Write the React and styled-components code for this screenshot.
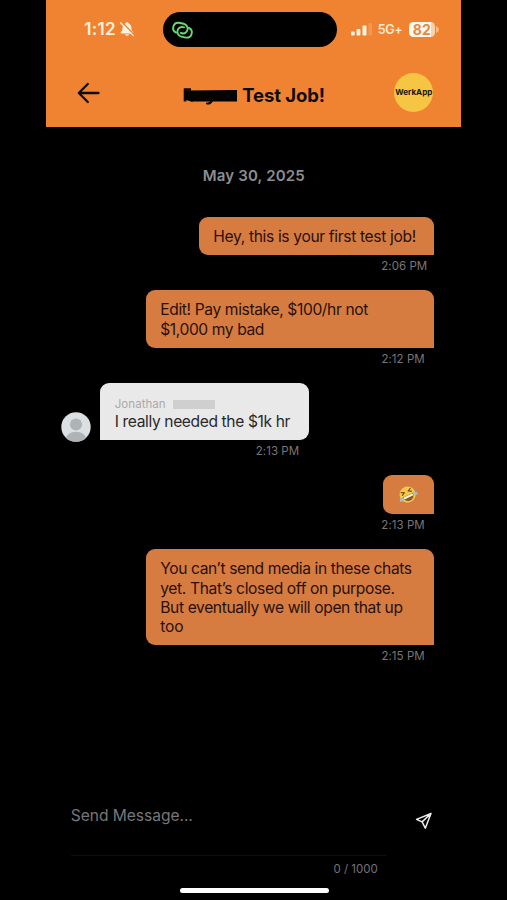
import React from "react";
import styled, { createGlobalStyle } from "styled-components";

const Global = createGlobalStyle`
  * { box-sizing: border-box; }
  html, body { margin: 0; background: #000; }
  body { font-family: Inter, "Liberation Sans", sans-serif; }
`;

const Stage = styled.div`
  display: flex;
  justify-content: center;
  width: 507px;
  height: 900px;
  overflow: hidden;
  background: #000;
`;

const Phone = styled.main`
  display: flex;
  flex-direction: column;
  width: 414.5px;
  height: 900px;
`;

const Header = styled.header`
  flex: none;
  height: 126.5px;
  background: #f08332;
`;

const StatusBar = styled.div`
  display: grid;
  grid-template-columns: 117px 174px 1fr;
  align-items: center;
  height: 59px;
`;

const Clock = styled.div`
  display: flex;
  align-items: center;
  gap: 3.5px;
  padding-left: 38px;
  color: #fff1dc;
  font-size: 17px;
  font-weight: 600;
  letter-spacing: 0.3px;
  line-height: 20px;
  padding-bottom: 1px;
  white-space: nowrap;
`;

const Island = styled.div`
  display: flex;
  align-items: center;
  height: 35.5px;
  padding-left: 7px;
  border-radius: 18px;
  background: #000;
`;

const Signals = styled.div`
  display: flex;
  align-items: center;
  padding-left: 13.5px;
  color: #ffe9cd;
`;

const Network = styled.span`
  width: 25px;
  margin: 0 6px 0 5px;
  font-size: 12.5px;
  font-weight: 600;
  letter-spacing: -0.4px;
`;

const Battery = styled.div`
  display: flex;
  align-items: center;
  gap: 1px;
`;

const Charge = styled.div`
  width: 26px;
  height: 15px;
  border-radius: 4.5px;
  background: linear-gradient(90deg, #fffaf0 0 84%, #fbd2a8 84%);
  color: #e58a42;
  font-size: 14px;
  font-weight: 700;
  line-height: 15px;
  text-align: center;
`;

const TitleBar = styled.div`
  display: grid;
  grid-template-columns: 117px 181px 1fr;
  align-items: center;
  height: 67px;
`;

const BackButton = styled.button`
  display: flex;
  width: 26px;
  height: 24px;
  margin: 0 0 0 30px;
  padding: 0;
  border: 0;
  background: none;
`;

const Title = styled.h1`
  display: flex;
  align-items: center;
  gap: 5px;
  margin: 4px 0 0;
  padding-left: 20px;
  color: #100b07;
  font-size: 18.5px;
  font-weight: 700;
  line-height: 22px;
  letter-spacing: -0.1px;
  white-space: nowrap;
`;

const Logo = styled.div`
  display: flex;
  align-items: center;
  justify-content: center;
  width: 39px;
  height: 39px;
  margin: 0 0 1px 50px;
  border-radius: 50%;
  background: #f5c543;
  color: #17130a;
  font-size: 8.1px;
  font-weight: 700;
  white-space: nowrap;
`;

const Chat = styled.section`
  display: flex;
  flex-direction: column;
  flex: 1;
  padding: 0 26.5px 0 14.5px;
`;

const DateLabel = styled.div`
  height: 90px;
  padding: 38px 0 0 142px;
  color: #8d8d90;
  font-size: 15px;
  font-weight: 600;
  line-height: 22px;
  letter-spacing: 0.17px;
  white-space: nowrap;
`;

const Message = styled.article`
  display: flex;
  flex-direction: column;
  align-items: ${(p) => (p.$incoming ? "flex-start" : "flex-end")};
`;

const BubbleRow = styled.div`
  display: flex;
  align-items: flex-end;
  gap: 9.5px;
`;

const Bubble = styled.div`
  width: ${(p) => p.$width}px;
  padding: 10.4px 14.5px 9px;
  border-radius: ${(p) => (p.$incoming ? "9px 9px 9px 0" : "9px 9px 0 9px")};
  background: ${(p) => (p.$incoming ? "#e9e9e9" : "#d67c41")};
  color: ${(p) => (p.$incoming ? "#29292b" : "#2a1009")};
  font-size: 15.6px;
  line-height: 19.25px;
`;

const Line = styled.div`
  letter-spacing: ${(p) => p.$track}px;
  white-space: nowrap;
`;

const Sender = styled.div`
  display: flex;
  align-items: center;
  gap: 7px;
  height: 19px;
  padding-top: 4px;
  color: #aaaaac;
  font-size: 11.5px;
  letter-spacing: 0.05px;
`;

const Redacted = styled.span`
  width: 42px;
  height: 9px;
  background: #cfcfcf;
`;

const Time = styled.time`
  height: 34.9px;
  padding: 3px ${(p) => p.$end}px 0 0;
  margin-left: ${(p) => p.$start || 0}px;
  color: #77777a;
  font-size: 11.5px;
  line-height: 16px;
  letter-spacing: 0.05px;
  white-space: nowrap;
`;

const Composer = styled.footer`
  display: grid;
  grid-template-columns: 316px 1fr;
  grid-template-rows: 71px 31px 13px;
  height: 115px;
  padding-left: 24.5px;
`;

const Field = styled.div`
  padding-top: 21px;
  border-bottom: 1px solid #0e0e0e;
  color: #77777a;
  font-size: 15.6px;
  line-height: 20px;
  letter-spacing: -0.05px;
`;

const SendButton = styled.button`
  display: flex;
  width: 18px;
  height: 18px;
  margin: 27px 0 0 28.5px;
  padding: 0;
  border: 0;
  background: none;
`;

const Counter = styled.div`
  padding: 5px 9px 0 0;
  color: #747477;
  font-size: 11.5px;
  line-height: 16px;
  text-align: right;
`;

const HomeIndicator = styled.div`
  grid-column: 1 / -1;
  width: 149px;
  height: 5px;
  margin: 0.5px 0 0 109px;
  border-radius: 3px;
  background: #fff;
`;

const MutedBell = () => (
  <svg width="16" height="16" viewBox="0 0 16 16" fill="none">
    <path d="M8 1.2c-.8 0-1.2.5-1.4 1.1C4.5 3 3.7 4.800 3.500 7.200c-.1 2-.6 2.600-1.500 3.500-.7.7-.3 1.800.6 1.800h10.800c.9 0 1.300-1.100.6-1.800-.9-.9-1.400-1.500-1.500-3.500-.2-2.400-1-4.200-3.100-4.900C9.200 1.700 8.800 1.200 8 1.200zM5.900 13.300a2.200 2.200 0 0 0 4.200 0z" fill="#fff1dc" />
    <path d="M2.800 1l12.300 12.500" stroke="#f08332" strokeWidth="1.400" />
    <path d="M1.500 1.800l12.800 12.800" stroke="#fff1dc" strokeWidth="1.250" strokeLinecap="round" />
  </svg>
);

const LinkIcon = () => (
  <svg width="24" height="20" viewBox="0 0 24 20" fill="none" stroke="#69d873" strokeWidth="1.900" strokeLinecap="round">
    <g transform="translate(12.500 10.200) rotate(12)">
      <path d="M-5.800 3.700A5.200 5.200 0 0 1-5-6.500H-.2A5 5 0 0 1 4.600 0C4 2 2.200 3.100 .2 3.100H-1" />
      <path d="M5.800-3.700A5.200 5.200 0 0 1 5 6.500H.2A5 5 0 0 1-4.600 0C-4-2-2.200-3.100-.2-3.100H1" />
    </g>
  </svg>
);

const SignalBars = () => (
  <svg width="22" height="13" viewBox="0 0 22 13" fill="#fff1dc">
    <rect x="0" y="8.500" width="3.700" height="4" rx="1" />
    <rect x="5.500" y="6" width="3.900" height="6.500" rx="1" />
    <rect x="11.500" y="2.500" width="4" height="10" rx="1" />
    <rect x="17.500" y="0" width="3.500" height="12.500" rx="1" opacity=".2" />
  </svg>
);

const BatteryTip = () => (
  <svg width="4" height="7" viewBox="0 0 4 7"><path d="M0 0q3 1.500 3 3.500T0 7z" fill="#f9bd83" /></svg>
);

const BackArrow = () => (
  <svg width="26" height="24" viewBox="0 0 26 24" fill="none" stroke="#100b07" strokeWidth="2.300" strokeLinecap="round" strokeLinejoin="round">
    <path d="M11.800 3L2.800 12l9 9M3.300 12H22.500" />
  </svg>
);

const RedactedName = () => (
  <svg width="54" height="20" viewBox="0 0 54 20" fill="none">
    <path d="M2 3.500v13M1 4.500h7M5 11l5 5" stroke="#0b0806" strokeWidth="2.600" />
    <path d="M3 5.500L54 5V16.500H8L3 15z" fill="#050302" />
    <path d="M24 18.500q3.500.5 5-3" stroke="#0b0806" strokeWidth="2" strokeLinecap="round" />
  </svg>
);

const AvatarFrame = styled.div`
  display: flex;
  margin-bottom: -1.5px;
`;

const Avatar = () => (
  <AvatarFrame>
    <svg width="30" height="30" viewBox="0 0 30 30">
      <defs><clipPath id="avatar"><circle cx="15" cy="15" r="14.700" /></clipPath></defs>
      <g clipPath="url(#avatar)">
        <rect width="30" height="30" fill="#dce0e2" />
        <circle cx="15" cy="12.500" r="6" fill="#aeb3b6" />
        <ellipse cx="15" cy="26.500" rx="10" ry="6.800" fill="#aeb3b6" />
      </g>
    </svg>
  </AvatarFrame>
);

const EmojiSlot = styled.div`
  display: flex;
  height: 19.25px;
`;

const Laughing = () => (
  <svg width="22" height="19" viewBox="0 0 22 19" fill="none">
    <g transform="rotate(-25 11 9.500)">
      <circle cx="11" cy="8.500" r="8" fill="#f3cb49" />
      <path d="M5.500 9.200h11c0 3.500-2.300 5.700-5.500 5.700S5.500 12.700 5.500 9.200z" fill="#8a5728" />
      <path d="M6.200 9.400h9.600v2.200H6.200z" fill="#fff6dc" />
      <path d="M6 4L9 5.500 6 7M16 4L13 5.500l3 1.500" stroke="#6d431c" strokeWidth="1.100" strokeLinecap="round" strokeLinejoin="round" />
      <ellipse cx="3.500" cy="10.500" rx="2.600" ry="1.500" transform="rotate(-35 3.500 10.500)" fill="#a4bfc0" />
      <ellipse cx="18.500" cy="10.500" rx="2.600" ry="1.500" transform="rotate(35 18.500 10.500)" fill="#a4bfc0" />
    </g>
  </svg>
);

const SendIcon = () => (
  <svg width="18" height="18" viewBox="0 0 18 18" fill="none" stroke="#eee" strokeWidth="1.450" strokeLinejoin="round">
    <path d="M16 1.500L1.500 7.300l5.600 2.600 3.200 6.300zM16 1.500L7.100 9.900" />
  </svg>
);

const messages = [
  { width: 235.5, time: "2:06 PM", end: 7, lines: [["Hey, this is your first test job!", -0.34]] },
  { width: 288.5, time: "2:12 PM", end: 9.5, lines: [["Edit! Pay mistake, $100/hr not", -0.37], ["$1,000 my bad", -0.4]] },
  { width: 209, time: "2:13 PM", start: 195, incoming: true, lines: [["I really needed the $1k hr", -0.38]] },
  { width: 51.5, time: "2:13 PM", end: 9.5, emoji: true },
  {
    width: 288.5, time: "2:15 PM", end: 9.5,
    lines: [["You can’t send media in these chats", -0.39], ["yet. That’s closed off on purpose.", -0.36], ["But eventually we will open that up", -0.38], ["too", -0.2]],
  },
];

export default function App() {
  return (
    <Stage>
      <Global />
      <Phone>
        <Header>
          <StatusBar>
            <Clock>1:12 <MutedBell /></Clock>
            <Island><LinkIcon /></Island>
            <Signals>
              <SignalBars />
              <Network>5G+</Network>
              <Battery><Charge>82</Charge><BatteryTip /></Battery>
            </Signals>
          </StatusBar>
          <TitleBar>
            <BackButton aria-label="Back"><BackArrow /></BackButton>
            <Title><RedactedName />Test Job!</Title>
            <Logo>WerkApp</Logo>
          </TitleBar>
        </Header>
        <Chat>
          <DateLabel>May 30, 2025</DateLabel>
          {messages.map((m, i) => (
            <Message key={i} $incoming={m.incoming}>
              <BubbleRow>
                {m.incoming && <Avatar />}
                <Bubble $width={m.width} $incoming={m.incoming}>
                  {m.incoming && <Sender>Jonathan <Redacted /></Sender>}
                  {m.emoji && <EmojiSlot><Laughing /></EmojiSlot>}
                  {m.lines?.map(([text, track]) => <Line key={text} $track={track}>{text}</Line>)}
                </Bubble>
              </BubbleRow>
              <Time $start={m.start} $end={m.end || 0}>{m.time}</Time>
            </Message>
          ))}
        </Chat>
        <Composer>
          <Field>Send Message...</Field>
          <SendButton aria-label="Send"><SendIcon /></SendButton>
          <Counter>0 / 1000</Counter>
          <HomeIndicator />
        </Composer>
      </Phone>
    </Stage>
  );
}
